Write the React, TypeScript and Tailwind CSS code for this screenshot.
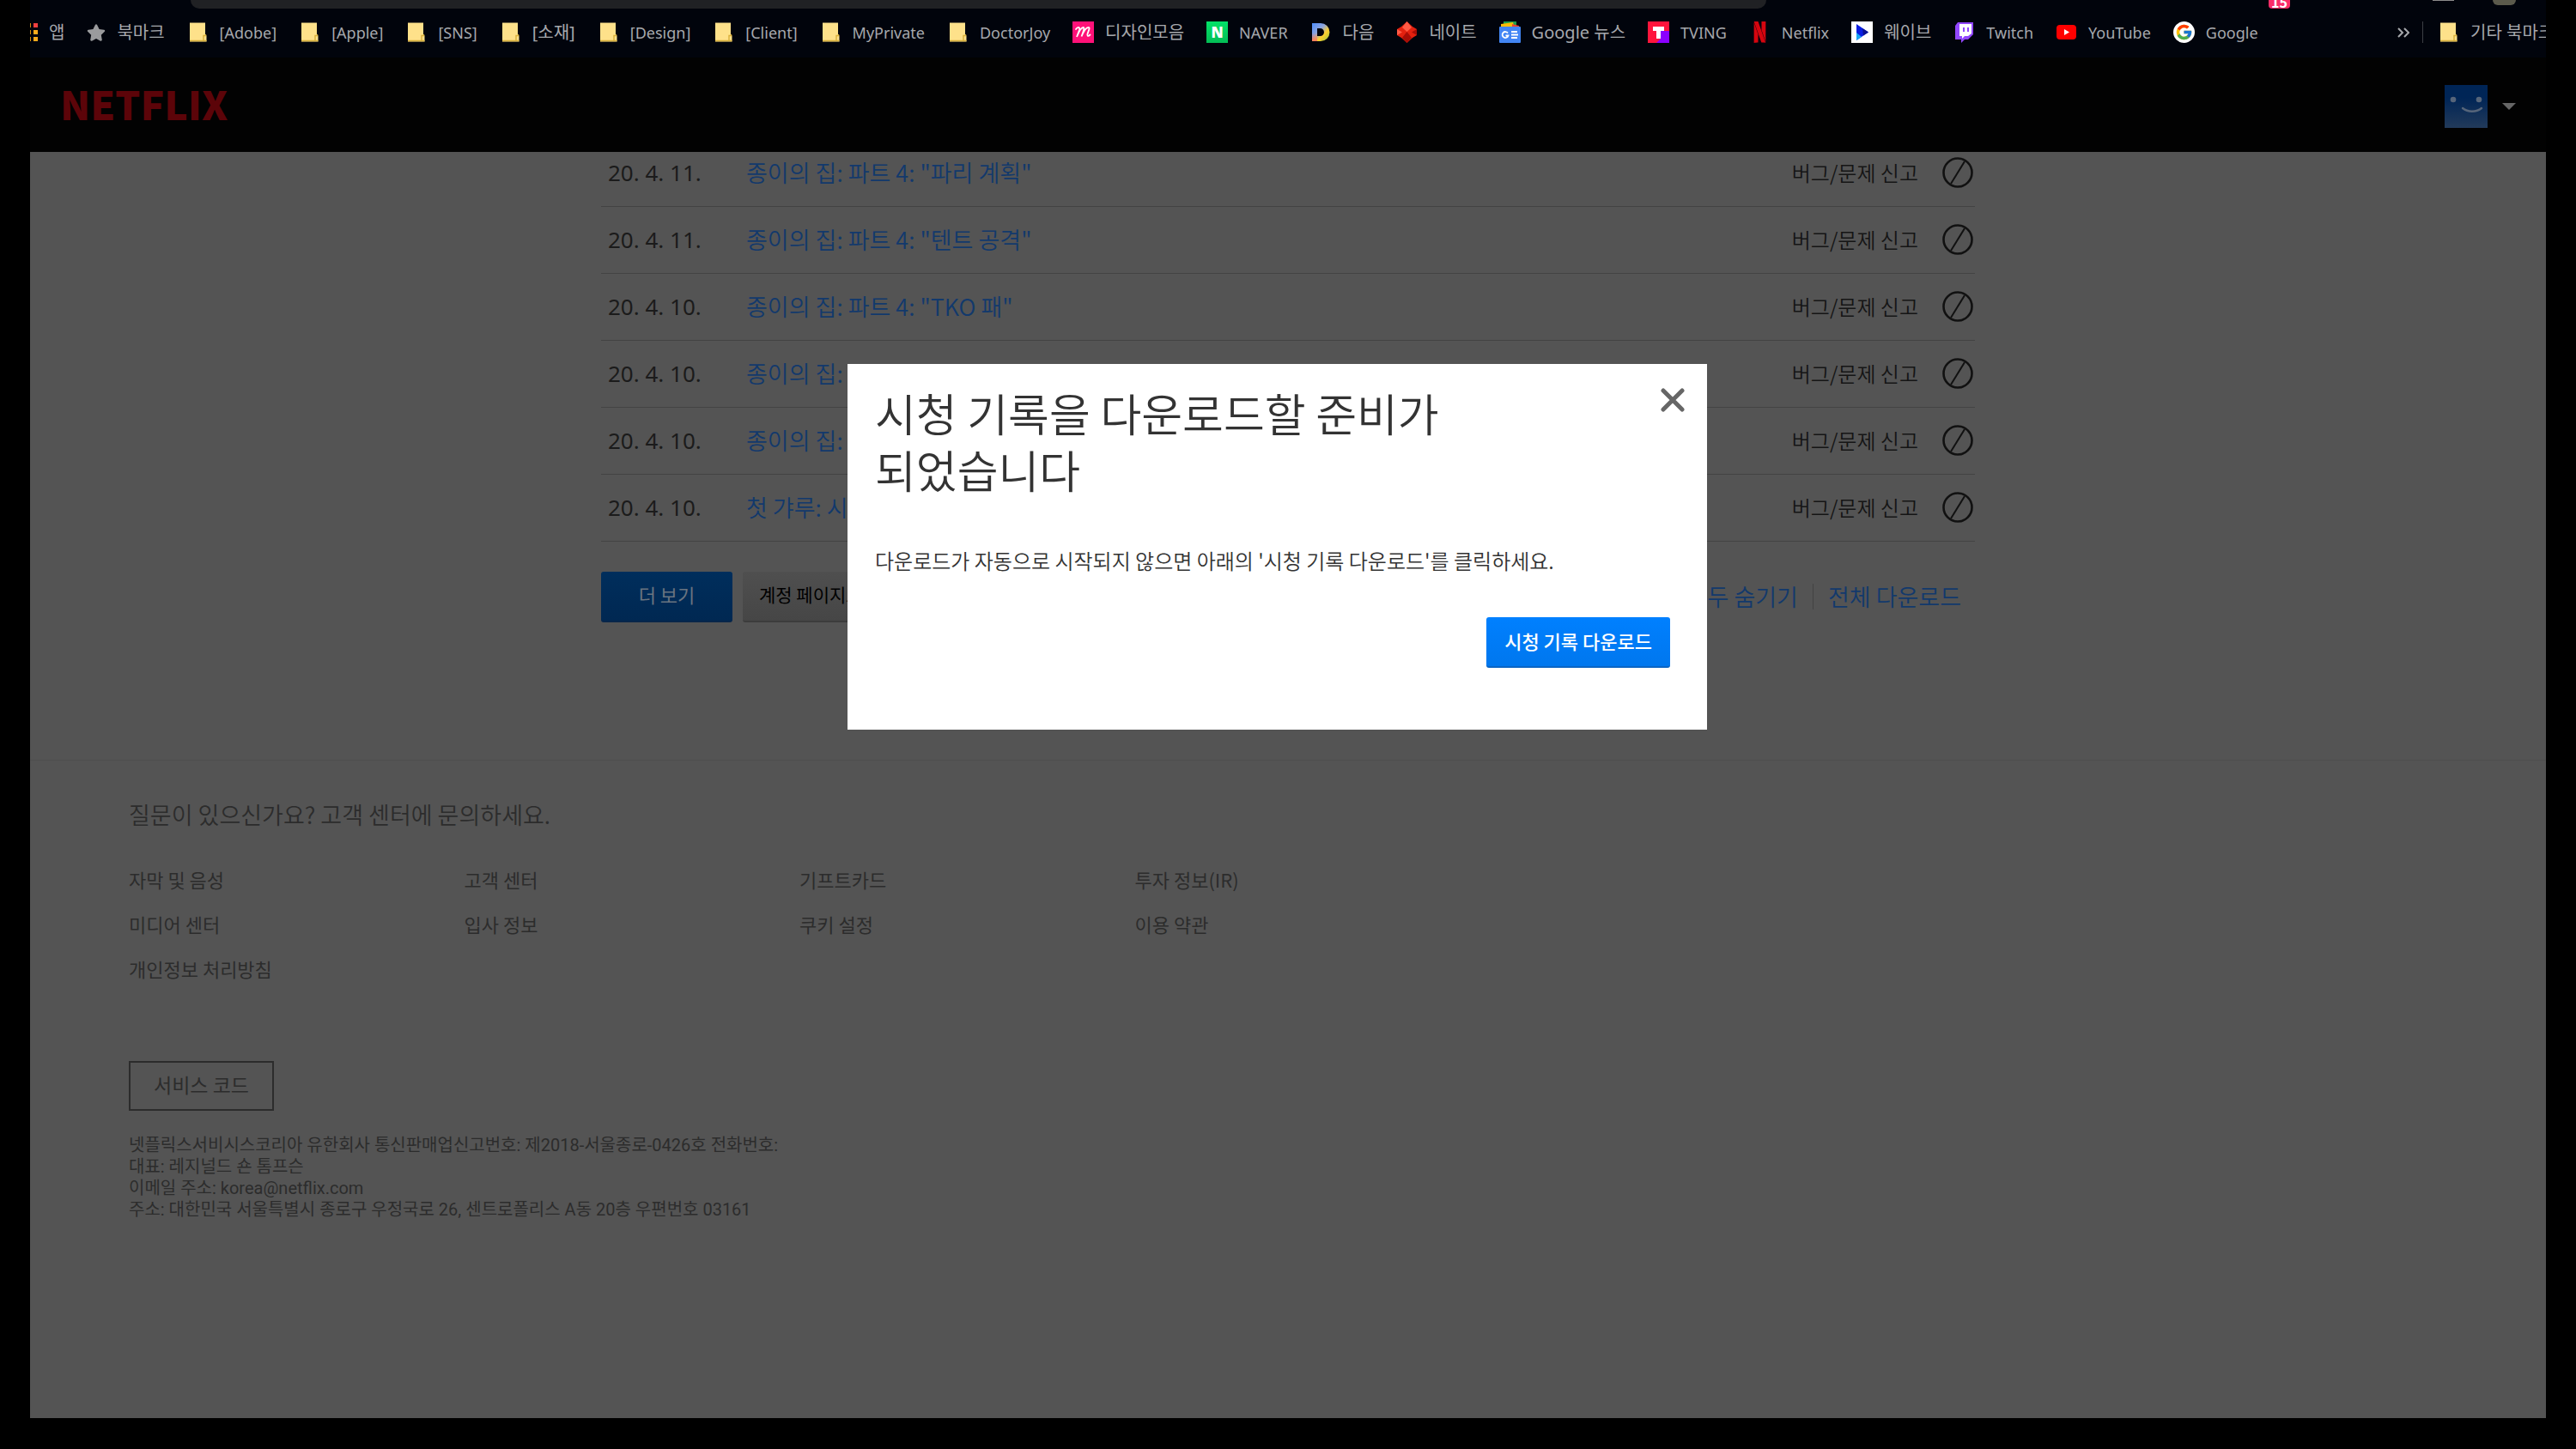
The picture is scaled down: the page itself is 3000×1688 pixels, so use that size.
import { ReactNode, useState } from 'react';
import { FaStar } from 'react-icons/fa';
import { FcGoogle } from 'react-icons/fc';
import { SiNetflix } from 'react-icons/si';

interface Bookmark {
  label: string;
  icon: ReactNode;
}

interface HistoryItem {
  date: string;
  title: string;
}

const FolderIcon = () => (
  <svg viewBox="0 0 25 25" className="w-[25px] h-[25px] shrink-0">
    <path d="M3 1.500h18v14l1.500 1v7H3z" fill="#fee18a" />
    <path d="M3 22.500h19.500M19 23v-6.500h2.500v-1.500" fill="none" stroke="#d9b13c" strokeWidth="1.400" />
  </svg>
);

const AppsIcon = () => (
  <svg viewBox="0 0 25 25" className="w-[25px] h-[25px] shrink-0">
    {[0, 1, 2].map(row => (
      <g key={row}>
        <rect x="1" y={2 + row * 8} width="5" height="5" fill="#34a853" />
        <rect x="12" y={2 + row * 8} width="5" height="5" fill="#d08a10" />
        <rect x="20" y={2 + row * 8} width="5" height="5" fill={row === 0 ? '#f23f3f' : '#fbab1c'} />
      </g>
    ))}
  </svg>
);

const MoumIcon = () => (
  <svg viewBox="0 0 25 25" className="w-[25px] h-[25px] shrink-0">
    <rect width="25" height="25" fill="#ff1178" />
    <path
      d="M4 9c2-3 5-3 4 1l-3 8c2-5 5-11 7.500-11 2 0 0 5-2 10.500 2-5 5-10.500 8-10.500 2.500 0 0 4-1 7.500-.7 2.500.5 3.500 3 1"
      fill="none"
      stroke="#fff"
      strokeWidth="1.800"
      strokeLinecap="round"
    />
  </svg>
);

const NaverIcon = () => (
  <span className="w-[25px] h-[25px] shrink-0 bg-linear-to-b from-[#02e368] to-[#03bd55] text-white text-[17px] leading-none font-black flex items-center justify-center">
    N
  </span>
);

const DaumIcon = () => (
  <svg viewBox="0 0 25 25" className="w-[25px] h-[25px] shrink-0">
    <defs>
      <linearGradient id="daum" x1="0" y1="0" x2="1" y2="1">
        <stop offset="0" stopColor="#4c8dff" />
        <stop offset="0.4" stopColor="#8fa5dc" />
        <stop offset="0.65" stopColor="#ffd02e" />
        <stop offset="1" stopColor="#8fc63f" />
      </linearGradient>
      <linearGradient id="daumFoot" x1="0" y1="0" x2="0" y2="1">
        <stop offset="0.55" stopColor="#ff7a59" stopOpacity="0" />
        <stop offset="1" stopColor="#ff7a59" />
      </linearGradient>
    </defs>
    <path d="M2 2h10a10.500 10.500 0 0 1 0 21H2zM8 8v9h3.500a4.500 4.500 0 0 0 0-9z" fill="url(#daum)" fillRule="evenodd" />
    <path d="M2 2h6v21H2z" fill="url(#daumFoot)" />
  </svg>
);

const NateIcon = () => (
  <svg viewBox="0 0 25 25" className="w-[25px] h-[25px] shrink-0">
    <path d="M12.500 0 19 6l5 3v7l-5 3-6.500 6L6 19l-5-3V9l5-3z" fill="#e3210f" />
    <path d="M12.500 0 18 7l-5.500 5L7 7zM1 9l6 3.500L1 16z" fill="#ff5a45" />
    <path d="M12.500 12 18 19l-5.500 6L7 19zM24 9v7l-6-3.500z" fill="#a90d06" />
  </svg>
);

const GoogleNewsIcon = () => (
  <svg viewBox="0 0 25 25" className="w-[25px] h-[25px] shrink-0">
    <path d="M5 0h15v8H5z" fill="#1f9d4d" />
    <path d="M2 3l14-2 2 7H2z" fill="#fbbc04" />
    <path d="M15 3l8 2v5h-8z" fill="#ea4335" />
    <rect y="6" width="25" height="19" rx="1" fill="#4285f4" />
    <path d="M10 13.500a3.500 3.500 0 1 0 .5 3H7.500" fill="none" stroke="#fff" strokeWidth="1.800" />
    <path d="M14 12h7M14 15.500h8M14 19h7" stroke="#fff" strokeWidth="1.800" />
  </svg>
);

const TvingIcon = () => (
  <svg viewBox="0 0 25 25" className="w-[25px] h-[25px] shrink-0">
    <rect width="25" height="25" fill="#ff153c" />
    <path d="M15 11h10v14H10l5-5z" fill="#8b00ff" />
    <path d="M6 6h13v5h-4v9h-5v-9H6z" fill="#fff" />
  </svg>
);

const WavveIcon = () => (
  <svg viewBox="0 0 25 25" className="w-[25px] h-[25px] shrink-0">
    <rect width="25" height="25" fill="#fff" />
    <path d="M6 3l14 9.500L6 22z" fill="#0a1ee0" />
    <path d="M6 22V13l6 5z" fill="#1aa7f5" />
    <path d="M13 8l7 4.500-6 4z" fill="#0a1190" />
  </svg>
);

const TwitchIcon = () => (
  <svg viewBox="0 0 25 25" className="w-[25px] h-[25px] shrink-0">
    <path d="M5 1h18v14l-6 6h-4l-4 4v-4H2V5z" fill="#9147ff" />
    <path d="M7 3h14v11l-4 3h-4l-3 3v-3H7z" fill="#fff" />
    <path d="M12 7v5M17 7v5" stroke="#9147ff" strokeWidth="2" />
  </svg>
);

const YoutubeIcon = () => (
  <svg viewBox="0 0 25 25" className="w-[25px] h-[25px] shrink-0">
    <rect x="1" y="4" width="23" height="17" rx="4" fill="#f00" />
    <path d="M10 9l6 3.500-6 3.500z" fill="#fff" />
  </svg>
);

const GoogleIcon = () => (
  <span className="w-[25px] h-[25px] shrink-0 rounded-full bg-white flex items-center justify-center">
    <FcGoogle className="w-[21px] h-[21px]" />
  </span>
);

const bookmarks: Bookmark[] = [
  { label: '앱', icon: <AppsIcon /> },
  { label: '북마크', icon: <FaStar className="w-[22px] h-[22px] shrink-0 text-[#9a9b9d]" /> },
  { label: '[Adobe]', icon: <FolderIcon /> },
  { label: '[Apple]', icon: <FolderIcon /> },
  { label: '[SNS]', icon: <FolderIcon /> },
  { label: '[소재]', icon: <FolderIcon /> },
  { label: '[Design]', icon: <FolderIcon /> },
  { label: '[Client]', icon: <FolderIcon /> },
  { label: 'MyPrivate', icon: <FolderIcon /> },
  { label: 'DoctorJoy', icon: <FolderIcon /> },
  { label: '디자인모음', icon: <MoumIcon /> },
  { label: 'NAVER', icon: <NaverIcon /> },
  { label: '다음', icon: <DaumIcon /> },
  { label: '네이트', icon: <NateIcon /> },
  { label: 'Google 뉴스', icon: <GoogleNewsIcon /> },
  { label: 'TVING', icon: <TvingIcon /> },
  { label: 'Netflix', icon: <SiNetflix className="w-[25px] h-[25px] shrink-0 text-[#d5050f]" /> },
  { label: '웨이브', icon: <WavveIcon /> },
  { label: 'Twitch', icon: <TwitchIcon /> },
  { label: 'YouTube', icon: <YoutubeIcon /> },
  { label: 'Google', icon: <GoogleIcon /> },
];

const history: HistoryItem[] = [
  { date: '20. 4. 11.', title: '종이의 집: 파트 4: "파리 계획"' },
  { date: '20. 4. 11.', title: '종이의 집: 파트 4: "텐트 공격"' },
  { date: '20. 4. 10.', title: '종이의 집: 파트 4: "TKO 패"' },
  { date: '20. 4. 10.', title: '종이의 집:' },
  { date: '20. 4. 10.', title: '종이의 집:' },
  { date: '20. 4. 10.', title: '첫 갸루: 시즌' },
];

const footerLinks = [
  '자막 및 음성', '고객 센터', '기프트카드', '투자 정보(IR)',
  '미디어 센터', '입사 정보', '쿠키 설정', '이용 약관',
  '개인정보 처리방침',
];

// Latin labels are set a little smaller than Hangul ones
const hasHangul = (text: string) => /[가-힣]/.test(text);

function BookmarkItem({ label, icon }: Bookmark) {
  return (
    <a href="#" className="flex items-center gap-[13px] shrink-0 whitespace-nowrap">
      {icon}
      <span className={hasHangul(label) ? 'text-[20px] leading-[28px]' : 'text-[18px] leading-[28px]'}>{label}</span>
    </a>
  );
}

function Toolbar() {
  return (
    <div className="flex h-[10px] overflow-hidden pl-[187px] pr-[35px]">
      <div className="h-full w-[1835px] rounded-b-[10px] bg-[#202124]"></div>
      <div className="flex flex-1 items-end justify-end">
        <span className="h-full w-[25px] overflow-hidden rounded-b-[4px] bg-[#fb2c68] text-white text-[16px] font-bold flex items-end justify-center leading-[16px]">15</span>
        <span className="ml-[166px] h-[1px] w-[25px] self-start bg-[#8c8c8c]"></span>
        <span className="ml-[45px] h-[6px] w-[27px] self-start rounded-b-full bg-[#5b5a4c]"></span>
      </div>
    </div>
  );
}

function BookmarksBar() {
  return (
    <nav className="flex h-[57px] items-center overflow-hidden pb-[2px] text-[#a6a8ac] font-['Noto_Sans','Noto_Sans_CJK_KR',sans-serif]">
      <div className="-ml-[16px] flex flex-1 items-center gap-[26px]">
        {bookmarks.map(bookmark => (
          <BookmarkItem key={bookmark.label} {...bookmark} />
        ))}
      </div>
      <button aria-label="북마크 더보기" className="shrink-0">
        <svg viewBox="0 0 14 12" className="w-[14px] h-[12px]">
          <path d="M1 1l5 5-5 5M8 1l5 5-5 5" fill="none" stroke="#a6a8ac" strokeWidth="2" />
        </svg>
      </button>
      <span className="ml-[15px] mr-[17px] h-[25px] w-[1px] bg-[#3c3f45]"></span>
      <div className="w-[126px] overflow-hidden">
        <BookmarkItem label="기타 북마크" icon={<FolderIcon />} />
      </div>
    </nav>
  );
}

function Header() {
  return (
    <header className="relative z-10 flex h-[110px] items-center justify-between bg-[#020202] px-[35px] pt-[4px]">
      <a href="#" className="pb-[8px] text-[46px] leading-[52px] font-black text-[#5c0409]">
        NETFLIX
      </a>
      <button aria-label="프로필" className="flex items-center gap-[17px]">
        <svg viewBox="0 0 50 50" className="w-[50px] h-[50px]">
          <defs>
            <linearGradient id="profile" x1="0" y1="0" x2="0" y2="1">
              <stop offset="0.3" stopColor="#002556" />
              <stop offset="1" stopColor="#223a5a" />
            </linearGradient>
          </defs>
          <rect width="50" height="50" fill="url(#profile)" />
          <circle cx="10" cy="17" r="3.300" fill="#56657a" />
          <circle cx="40" cy="17" r="3.300" fill="#56657a" />
          <path d="M21 27c6 5 16 5 22 0" fill="none" stroke="#56657a" strokeWidth="2.400" strokeLinecap="round" />
        </svg>
        <svg viewBox="0 0 16 8" className="w-[16px] h-[8px]">
          <path d="M0 0h16L8 8z" fill="#666" />
        </svg>
      </button>
    </header>
  );
}

function HistoryTable() {
  return (
    <table className="w-full border-collapse">
      <tbody>
        {history.map((item, i) => (
          <tr key={i} className="h-[78px] border-b border-[#434343]">
            <td className="w-[169px] pl-[8px] text-[26px] leading-[36px] text-[#1b1b1b] font-['Noto_Sans',sans-serif]">{item.date}</td>
            <td className="text-[27px] leading-[36px] font-[350]">
              <a href="#" className="text-[#12396c]">{item.title}</a>
            </td>
            <td className="text-right text-[24px] leading-[36px] font-[350] text-[#151515]">
              <a href="#">버그/문제 신고</a>
            </td>
            <td className="w-[66px] pr-[2px]">
              <button aria-label="시청 기록에서 숨기기" className="ml-auto block">
                <svg viewBox="0 0 36 36" className="w-[36px] h-[36px]" fill="none" stroke="#111">
                  <circle cx="18" cy="18" r="16.500" strokeWidth="2.600" />
                  <path d="M26 5 10 31" strokeWidth="2" />
                </svg>
              </button>
            </td>
          </tr>
        ))}
      </tbody>
    </table>
  );
}

function Footer() {
  return (
    <footer className="border-t border-[#4d4d4d] px-[115px] pt-[45px] text-[#2c2c2c]">
      <p className="text-[27px] leading-[36px] font-[350]">
        <a href="#">질문이 있으신가요? 고객 센터에 문의하세요.</a>
      </p>
      <ul className="mt-[31px] grid max-w-[1562px] grid-cols-4">
        {footerLinks.map(link => (
          <li key={link} className="text-[22px] leading-[52px]">
            <a href="#">{link}</a>
          </li>
        ))}
      </ul>
      <button className="mt-[82px] block h-[58px] border-2 border-[#2c2c2c] px-[27px] pb-[2px] text-[23px]">서비스 코드</button>
      <address className="mt-[28px] text-[20px] leading-[25px] not-italic font-['Roboto','Noto_Sans_CJK_KR',sans-serif]">
        <p>넷플릭스서비시스코리아 유한회사 통신판매업신고번호: 제2018-서울종로-0426호 전화번호:</p>
        <p>대표: 레지널드 숀 톰프슨</p>
        <p>이메일 주소: korea@netflix.com</p>
        <p>주소: 대한민국 서울특별시 종로구 우정국로 26, 센트로폴리스 A동 20층 우편번호 03161</p>
      </address>
    </footer>
  );
}

function DownloadModal({ onClose }: { onClose: () => void }) {
  return (
    <div className="absolute inset-x-0 top-[247px] z-20 flex justify-center pr-[25px]">
      <div role="dialog" aria-labelledby="modal-title" className="w-[1001px] bg-white px-[32px] pt-[24px] pb-[72px]">
        <div className="flex items-start justify-between">
          <h1 id="modal-title" className="max-w-[760px] break-keep text-[52px] leading-[66px] font-[350] text-[#333]">
            시청 기록을 다운로드할 준비가 되었습니다
          </h1>
          <button onClick={onClose} aria-label="닫기" className="-mr-[6px] mt-[4px]">
            <svg viewBox="0 0 28 28" className="w-[28px] h-[28px]">
              <path d="M3 3l22 22M25 3 3 25" stroke="#666" strokeWidth="5" strokeLinecap="round" />
            </svg>
          </button>
        </div>
        <p className="mt-[55px] text-[24px] leading-[36px] font-[350] text-[#333]">
          다운로드가 자동으로 시작되지 않으면 아래의 '시청 기록 다운로드'를 클릭하세요.
        </p>
        <div className="mt-[48px] flex justify-end pr-[11px]">
          <button className="h-[59px] rounded-[3px] border-b-2 border-[#0a65c4] bg-linear-to-b from-[#0080ff] to-[#0077ee] px-[21px] pb-[3px] text-[22px] font-medium text-white">
            시청 기록 다운로드
          </button>
        </div>
      </div>
    </div>
  );
}

export default function App() {
  const [isModalOpen, setIsModalOpen] = useState(true);

  return (
    <div className="flex min-h-screen flex-col bg-black px-[35px] pb-9 font-['Noto_Sans_CJK_KR',sans-serif]">
      <div className="bg-[#01040c]">
        <Toolbar />
        <BookmarksBar />
      </div>

      <Header />

      <div className="relative flex-1 bg-[#545454]">
        <main className="mx-auto -mt-[15px] max-w-[1600px]">
          <HistoryTable />

          {/* Actions under the table */}
          <div className="mt-[35px] flex items-center justify-between pr-[16px]">
            <div className="flex gap-[12px]">
              <button className="h-[59px] w-[153px] rounded-[3px] border-b-2 border-[#08264a] bg-linear-to-b from-[#002e5c] to-[#002852] pb-[3px] text-[22px] text-[#6a7480]">
                더 보기
              </button>
              <button className="h-[59px] rounded-[3px] border-b-2 border-[#3c3c3c] bg-linear-to-b from-[#4f4f4f] to-[#464646] px-[19px] pb-[3px] text-[21px] text-black">
                계정 페이지로 돌아가기
              </button>
            </div>
            <div className="flex items-center text-[27px] leading-[36px] font-[350] text-[#12396c]">
              <a href="#">모두 숨기기</a>
              <span className="mx-[17px] h-[30px] w-[1px] bg-[#434343]"></span>
              <a href="#">전체 다운로드</a>
            </div>
          </div>
        </main>

        <div className="mt-[160px]">
          <Footer />
        </div>

        {isModalOpen && <DownloadModal onClose={() => setIsModalOpen(false)} />}
      </div>
    </div>
  );
}
